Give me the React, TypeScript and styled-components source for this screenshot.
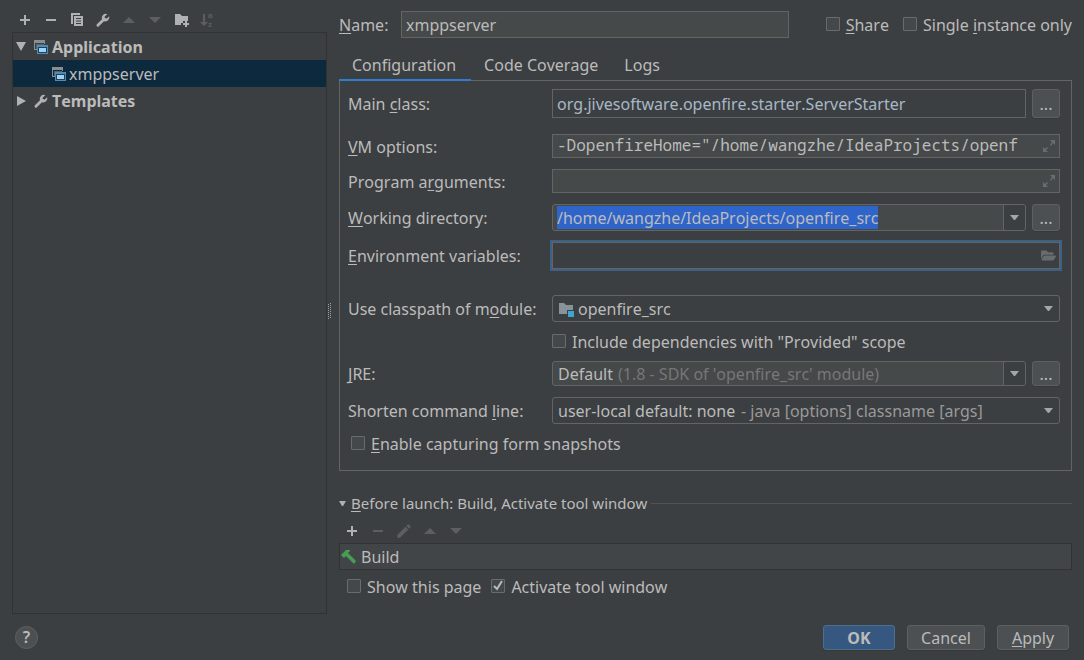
import React from "react";
import styled, { createGlobalStyle, css } from "styled-components";
import { FaFolderOpen } from "react-icons/fa";
import { MdEdit } from "react-icons/md";

const c = {
  bg: "#3c3f41",
  text: "#bbbbbb",
  dim: "#777777",
  field: "#45494a",
  border: "#646464",
  dark: "#323232",
  icon: "#afb1b3",
  iconOff: "#5c5e60",
};

const GlobalStyle = createGlobalStyle`
  * { box-sizing: border-box; }
  html, body, #root { height: 100%; }
  body {
    margin: 0;
    background: ${c.bg};
    color: ${c.text};
    font: 16px/22px "Noto Sans", sans-serif;
    font-kerning: none;
  }
  button, input, select { font: inherit; font-kerning: none; color: inherit; margin: 0; }
  u {
    text-decoration: underline 1px;
    text-underline-offset: 2px;
    text-decoration-skip-ink: none;
  }
  svg { display: block; flex: none; }
`;

const Dialog = styled.div`
  display: flex;
  flex-direction: column;
  min-height: 100%;
`;

const Body = styled.div`
  flex: 1;
  display: grid;
  grid-template-columns: minmax(200px, 315px) 12px minmax(0, 1fr);
  padding: 0 12px;
`;

const Sidebar = styled.aside`
  display: flex;
  flex-direction: column;
`;

const Toolbar = styled.div<{ $inset?: boolean }>`
  display: flex;
  align-items: center;
  height: ${(p) => (p.$inset ? 29 : 32)}px;
  padding-top: ${(p) => (p.$inset ? 4 : 8)}px;
`;

const ToolButton = styled.button`
  display: grid;
  place-items: center;
  width: 26px;
  height: 24px;
  padding: 0;
  border: 0;
  background: none;
  color: ${c.icon};
  &:disabled { color: ${c.iconOff}; }
`;

const Tree = styled.ul`
  flex: 1;
  margin: 0;
  padding: 0;
  list-style: none;
  border: 1px solid ${c.dark};
`;

const ItemIcon = styled.span`
  display: grid;
  place-items: center;
  width: 16px;
  margin-right: 2px;
  color: ${c.icon};
`;

const TreeItem = styled.li<{ $level?: number; $selected?: boolean; $bold?: boolean }>`
  display: flex;
  align-items: center;
  height: 27px;
  padding-left: ${(p) => (p.$level ? 38 : 2)}px;
  background: ${(p) => (p.$selected ? "#0d293e" : "transparent")};
  font-weight: ${(p) => (p.$bold ? 700 : 400)};
  ${(p) => p.$bold && css`
    ${ItemIcon} { margin-right: 3px; }
  `}
`;

const Twisty = styled.span`
  display: grid;
  place-items: center;
  width: 12px;
  margin-right: 6px;
`;

const Splitter = styled.div`
  display: flex;
  align-items: center;
  padding: 7px 0 0 1px;
`;

const Main = styled.main`
  display: flex;
  flex-direction: column;
`;

const NameRow = styled.div`
  display: flex;
  align-items: center;
  height: 27px;
  margin-top: 11px;
`;

const NameLabel = styled.label`
  width: 62px;
`;

const NameInput = styled.input`
  flex: 1;
  min-width: 0;
  height: 27px;
  margin-right: 37px;
  padding: 0 4px;
  border: 1px solid ${c.border};
  background: ${c.field};
  outline: 0;
`;

const CheckLabel = styled.label<{ $after?: number }>`
  display: flex;
  align-items: center;
  gap: 6px;
  margin-right: ${(p) => p.$after ?? 0}px;
  white-space: nowrap;
`;

const CheckBox = styled.input.attrs({ type: "checkbox" })`
  appearance: none;
  width: 14px;
  height: 14px;
  border: 1px solid #6b6b6b;
  border-radius: 1px;
  background: #43494a;
`;

const CheckStack = styled.span`
  display: grid;
  margin-top: -2px;
  > * { grid-area: 1 / 1; }
  > svg { pointer-events: none; }
`;

const Tabs = styled.div`
  display: flex;
  height: 30px;
  margin-top: 13px;
  margin-bottom: -1px;
`;

const Tab = styled.button<{ $active?: boolean }>`
  height: 30px;
  padding: 0 13px 2px;
  border: 0;
  background: none;
  ${(p) => p.$active && css`
    padding-right: 15px;
    padding-bottom: 0;
    border-bottom: 2px solid #2f7fcf;
    z-index: 1;
  `}
`;

const Panel = styled.section`
  padding: 8px 11px 14px 8px;
  border: 1px solid ${c.border};
`;

const Row = styled.div<{ $gap: number; $h: number }>`
  display: flex;
  align-items: center;
  gap: 6px;
  height: ${(p) => p.$h}px;
  margin-top: ${(p) => p.$gap}px;
`;

const RowLabel = styled.label`
  flex: none;
  width: 198px;
  white-space: nowrap;
`;

const Indent = styled.div`
  padding-left: 204px;
`;

const CheckRow = styled.div`
  padding-left: 3px;
`;

const Shell = styled.span<{ $filled?: boolean; $round?: boolean; $focus?: boolean; $low?: boolean }>`
  flex: 1;
  align-self: flex-start;
  min-width: 0;
  height: ${(p) => (p.$low ? "24px" : "100%")};
  display: flex;
  align-items: center;
  border: 1px solid ${c.border};
  border-radius: ${(p) => (p.$round ? 3 : 0)}px;
  background: ${(p) => (p.$filled ? c.field : "transparent")};
  box-shadow: ${(p) => (p.$focus ? "0 0 0 2px #3d6185" : "none")};
`;

const Input = styled.input<{ $mono?: boolean; $code?: boolean }>`
  flex: 1;
  min-width: 0;
  height: 100%;
  padding: 0 4px;
  border: 0;
  outline: 0;
  background: none;
  ${(p) => p.$code && css`color: #a9b7c6;`}
  ${(p) => p.$mono && css`
    padding: 0 4px 2px;
    font-family: "Noto Sans Mono", "DejaVu Sans Mono", monospace;
  `}
`;

const SelectedInput = styled.input`
  field-sizing: content;
  height: 23px;
  margin-left: 4px;
  padding: 0;
  border: 0;
  outline: 0;
  background: #2f65ca;
`;

const PlainSelect = styled.select`
  appearance: none;
  height: 22px;
  padding: 0;
  border: 0;
  outline: 0;
  background: none;
`;

const Hint = styled.span<{ $dim?: boolean }>`
  margin-left: 5px;
  white-space: nowrap;
  color: ${(p) => (p.$dim ? c.dim : "#999999")};
`;

const Lead = styled.span<{ $tight?: boolean }>`
  display: flex;
  padding-left: ${(p) => (p.$tight ? 4 : 5)}px;
`;

const FieldButton = styled.button`
  display: grid;
  place-items: center;
  width: 22px;
  height: 100%;
  margin-left: auto;
  padding: 0;
  border: 0;
  background: none;
  color: #686c6e;
`;

const DropButton = styled(FieldButton)<{ $boxed?: boolean }>`
  color: #a4a6a8;
  border-left: ${(p) => (p.$boxed ? `1px solid ${c.border}` : "0")};
  background: ${(p) => (p.$boxed ? c.bg : "none")};
  border-radius: 0 2px 2px 0;
`;

const PushButton = styled.button<{ $w: number; $primary?: boolean }>`
  width: ${(p) => p.$w}px;
  height: 25px;
  padding: 1px 0 0;
  border: 1px solid ${(p) => (p.$primary ? "#4c708c" : "#5e6060")};
  border-radius: 3px;
  background: ${(p) => (p.$primary ? "#365880" : "#4c5052")};
  box-shadow: 0 1px 0 #363839;
  font-weight: ${(p) => (p.$primary ? 700 : 400)};
  line-height: 22px;
`;

const MoreButton = styled(PushButton).attrs({ $w: 28 })`
  height: 100%;
`;

const SectionHead = styled.h2`
  display: flex;
  align-items: center;
  height: 22px;
  margin: 21px 0 0;
  font-size: 15px;
  font-weight: 400;
  white-space: nowrap;
  &::after {
    content: "";
    flex: 1;
    height: 1px;
    margin-left: 4px;
    background: #515355;
  }
`;

const HeadArrow = styled.span`
  width: 12px;
`;

const TaskList = styled.ul`
  margin: 0;
  padding: 0;
  list-style: none;
  border: 1px solid ${c.dark};
  background: #414547;
`;

const Task = styled.li`
  display: flex;
  align-items: center;
  gap: 4px;
  height: 25px;
  padding-left: 1px;
`;

const Options = styled.div`
  display: flex;
  padding: 6px 8px 0;
`;

const Footer = styled.footer`
  display: flex;
  align-items: center;
  gap: 12px;
  height: 46px;
  padding: 0 15px;
`;

const Help = styled.button`
  display: grid;
  place-items: center;
  width: 23px;
  height: 23px;
  margin-right: auto;
  padding: 0;
  border: 1px solid #5e6060;
  border-radius: 50%;
  background: #4c5052;
  font-weight: 600;
  line-height: 20px;
`;

const SortLetter = styled.text`
  font: 700 8px "Liberation Sans", sans-serif;
`;

const Plus = () => (
  <svg width="16" height="16" fill="currentColor"><path d="M7 3h2v4h4v2H9v4H7V9H3V7h4z" /></svg>
);
const Minus = () => (
  <svg width="16" height="16" fill="currentColor"><path d="M3 7h10v2H3z" /></svg>
);
const Up = () => (
  <svg width="16" height="16" fill="currentColor"><path d="M2 11l6-6 6 6z" /></svg>
);
const Down = () => (
  <svg width="16" height="16" fill="currentColor"><path d="M2 5h12l-6 6z" /></svg>
);
const Copy = () => (
  <svg width="16" height="16" fill="currentColor">
    <path d="M2 1h9v2H4v9H2z" />
    <path fillRule="evenodd" d="M5 4h9v10H5zM7 6v1h5V6zM7 8.500v1h5v-1zM7 11v1h5v-1z" />
  </svg>
);
const Wrench = () => (
  <svg width="16" height="16" fill="currentColor">
    <path d="M12.300 2.200A4 4 0 0 0 7 7.300L1.900 12.200a1.400 1.400 0 0 0 2 2L9 9.200A4 4 0 0 0 14.200 4.200L11.800 6.500 9.800 6 9.700 4.600z" />
  </svg>
);
const NewFolder = () => (
  <svg width="16" height="16" fill="currentColor">
    <path d="M2 2h5l2 2h6v5h-5v2H8v2H2z" />
    <path d="M12 9h2v2h2v2h-2v2h-2v-2h-2v-2h2z" />
  </svg>
);
const Sort = () => (
  <svg width="16" height="20" fill="currentColor">
    <path d="M4 4h2v8h3l-4 4-4-4h3z" />
    <SortLetter x="9" y="8">a</SortLetter>
    <SortLetter x="9" y="17">z</SortLetter>
  </svg>
);
const AppIcon = () => (
  <svg width="16" height="16">
    <path d="M1 1h11v4h-1V4H2v6h2v1H1z" fill="#8b8e90" />
    <path d="M1 1h11v2H1z" fill="#8b8e90" />
    <path d="M3 5h8v1H4v4H3z" fill="#5c6063" />
    <path d="M4 6h11v9H4z" fill="#4a8db7" />
    <path d="M5 8h9v6H5z" fill="#2b3e4c" />
    <path d="M6 9h7v4H6z" fill="#99d3f9" />
  </svg>
);
const Caret = () => (
  <svg width="9" height="5" fill="currentColor"><path d="M0 0h9L5 5H4z" /></svg>
);
const Expand = () => (
  <svg width="14" height="14" fill="currentColor">
    <path d="M9 1h5v5l-2-2-2 3-1-1 2-3zM2 8l2 2 2-2 1 1-2 2 2 2H2z" />
  </svg>
);
const Module = () => (
  <svg width="16" height="16">
    <path d="M1 2h5l2 2h7v5H9v4H1z" fill="#87939a" />
    <path d="M10 10h6v6h-6z" fill="#3fa5cf" />
  </svg>
);
const Hammer = () => (
  <svg width="16" height="16" fill="#499c54">
    <path d="M0 6l5-5h4v1L7 4l8 8-2 3-8-8-2 2z" />
  </svg>
);
const Tick = () => (
  <svg width="14" height="14" fill="none" stroke="#bbbbbb" strokeWidth="2">
    <path d="M3 7l3 3 5-8" />
  </svg>
);
const Grip = () => (
  <svg width="4" height="16" fill="#a0a2a4">
    {[0, 2, 4, 6, 8, 10, 12, 14].map((y) => (
      <React.Fragment key={y}>
        <path d={`M0 ${y + 1}h1v1H0z`} />
        <path d={`M2 ${y}h1v1H2z`} />
      </React.Fragment>
    ))}
  </svg>
);

function Check({ id, checked, after, children }: { id: string; checked?: boolean; after?: number; children: React.ReactNode }) {
  return (
    <CheckLabel htmlFor={id} $after={after}>
      <CheckStack>
        <CheckBox id={id} defaultChecked={checked} />
        {checked && <Tick />}
      </CheckStack>
      <span>{children}</span>
    </CheckLabel>
  );
}

export default function App() {
  return (
    <Dialog>
      <GlobalStyle />
      <Body>
        <Sidebar>
          <Toolbar>
            <ToolButton aria-label="Add"><Plus /></ToolButton>
            <ToolButton aria-label="Remove"><Minus /></ToolButton>
            <ToolButton aria-label="Copy"><Copy /></ToolButton>
            <ToolButton aria-label="Edit templates"><Wrench /></ToolButton>
            <ToolButton aria-label="Move up" disabled><Up /></ToolButton>
            <ToolButton aria-label="Move down" disabled><Down /></ToolButton>
            <ToolButton aria-label="New folder"><NewFolder /></ToolButton>
            <ToolButton aria-label="Sort" disabled><Sort /></ToolButton>
          </Toolbar>
          <Tree role="tree">
            <TreeItem role="treeitem" $bold>
              <Twisty><svg width="10" height="9" fill={c.icon}><path d="M0 0h10L5 9z" /></svg></Twisty>
              <ItemIcon><AppIcon /></ItemIcon>
              Application
            </TreeItem>
            <TreeItem role="treeitem" $level={1} $selected>
              <ItemIcon><AppIcon /></ItemIcon>
              xmppserver
            </TreeItem>
            <TreeItem role="treeitem" $bold>
              <Twisty><svg width="9" height="10" fill={c.icon}><path d="M0 0v10l9-5z" /></svg></Twisty>
              <ItemIcon><Wrench /></ItemIcon>
              Templates
            </TreeItem>
          </Tree>
        </Sidebar>
        <Splitter><Grip /></Splitter>
        <Main>
          <NameRow>
            <NameLabel htmlFor="name"><u>N</u>ame:</NameLabel>
            <NameInput id="name" defaultValue="xmppserver" />
            <Check id="share" after={14}><u>S</u>hare</Check>
            <Check id="single">Single <u>i</u>nstance only</Check>
          </NameRow>
          <Tabs role="tablist">
            <Tab role="tab" $active>Configuration</Tab>
            <Tab role="tab">Code Coverage</Tab>
            <Tab role="tab">Logs</Tab>
          </Tabs>
          <Panel>
            <Row $gap={0} $h={29}>
              <RowLabel htmlFor="main">Main <u>c</u>lass:</RowLabel>
              <Shell><Input id="main" $code defaultValue="org.jivesoftware.openfire.starter.ServerStarter" /></Shell>
              <MoreButton>...</MoreButton>
            </Row>
            <Row $gap={16} $h={26}>
              <RowLabel htmlFor="vm"><u>V</u>M options:</RowLabel>
              <Shell $filled $low>
                <Input id="vm" $mono defaultValue={'-DopenfireHome="/home/wangzhe/IdeaProjects/openf'} />
                <FieldButton aria-label="Expand"><Expand /></FieldButton>
              </Shell>
            </Row>
            <Row $gap={9} $h={26}>
              <RowLabel htmlFor="args">Program a<u>r</u>guments:</RowLabel>
              <Shell $filled $low>
                <Input id="args" $mono />
                <FieldButton aria-label="Expand"><Expand /></FieldButton>
              </Shell>
            </Row>
            <Row $gap={9} $h={27}>
              <RowLabel htmlFor="dir"><u>W</u>orking directory:</RowLabel>
              <Shell $filled $round>
                <SelectedInput id="dir" defaultValue="/home/wangzhe/IdeaProjects/openfire_src" />
                <DropButton $boxed aria-label="Recent directories"><Caret /></DropButton>
              </Shell>
              <MoreButton>...</MoreButton>
            </Row>
            <Row $gap={11} $h={27}>
              <RowLabel htmlFor="env"><u>E</u>nvironment variables:</RowLabel>
              <Shell $focus>
                <Input id="env" />
                <FieldButton aria-label="Browse"><FaFolderOpen size={15} /></FieldButton>
              </Shell>
            </Row>
            <Row $gap={26} $h={27}>
              <RowLabel htmlFor="module">Use classpath of m<u>o</u>dule:</RowLabel>
              <Shell $round>
                <Lead><Module /></Lead>
                <Lead $tight><PlainSelect id="module"><option>openfire_src</option></PlainSelect></Lead>
                <DropButton tabIndex={-1} aria-label="Open list"><Caret /></DropButton>
              </Shell>
            </Row>
            <Row $gap={8} $h={24}>
              <Indent><Check id="provided">Include dependencies with "Provided" scope</Check></Indent>
            </Row>
            <Row $gap={7} $h={25}>
              <RowLabel htmlFor="jre"><u>J</u>RE:</RowLabel>
              <Shell $filled $round>
                <Lead><PlainSelect id="jre"><option>Default</option></PlainSelect></Lead>
                <Hint $dim>(1.8 - SDK of 'openfire_src' module)</Hint>
                <DropButton $boxed tabIndex={-1} aria-label="Open list"><Caret /></DropButton>
              </Shell>
              <MoreButton>...</MoreButton>
            </Row>
            <Row $gap={11} $h={27}>
              <RowLabel htmlFor="shorten">Shorten command <u>l</u>ine:</RowLabel>
              <Shell $round>
                <Lead><PlainSelect id="shorten"><option>user-local default: none</option></PlainSelect></Lead>
                <Hint>- java [options] classname [args]</Hint>
                <DropButton tabIndex={-1} aria-label="Open list"><Caret /></DropButton>
              </Shell>
            </Row>
            <Row $gap={8} $h={24}>
              <CheckRow><Check id="snap"><u>E</u>nable capturing form snapshots</Check></CheckRow>
            </Row>
          </Panel>
          <SectionHead>
            <HeadArrow><svg width="8" height="5" fill={c.icon}><path d="M0 0h7L4 5H3z" /></svg></HeadArrow>
            <span><u>B</u>efore launch: Build, Activate tool window</span>
          </SectionHead>
          <Toolbar $inset>
            <ToolButton aria-label="Add task"><Plus /></ToolButton>
            <ToolButton aria-label="Remove task" disabled><Minus /></ToolButton>
            <ToolButton aria-label="Edit task" disabled><MdEdit size={18} /></ToolButton>
            <ToolButton aria-label="Move task up" disabled><Up /></ToolButton>
            <ToolButton aria-label="Move task down" disabled><Down /></ToolButton>
          </Toolbar>
          <TaskList>
            <Task><Hammer />Build</Task>
          </TaskList>
          <Options>
            <Check id="show" after={10}>Show this page</Check>
            <Check id="activate" checked>Activate tool window</Check>
          </Options>
        </Main>
      </Body>
      <Footer>
        <Help aria-label="Help">?</Help>
        <PushButton $w={72} $primary>OK</PushButton>
        <PushButton $w={78}>Cancel</PushButton>
        <PushButton $w={72}><span><u>A</u>pply</span></PushButton>
      </Footer>
    </Dialog>
  );
}
